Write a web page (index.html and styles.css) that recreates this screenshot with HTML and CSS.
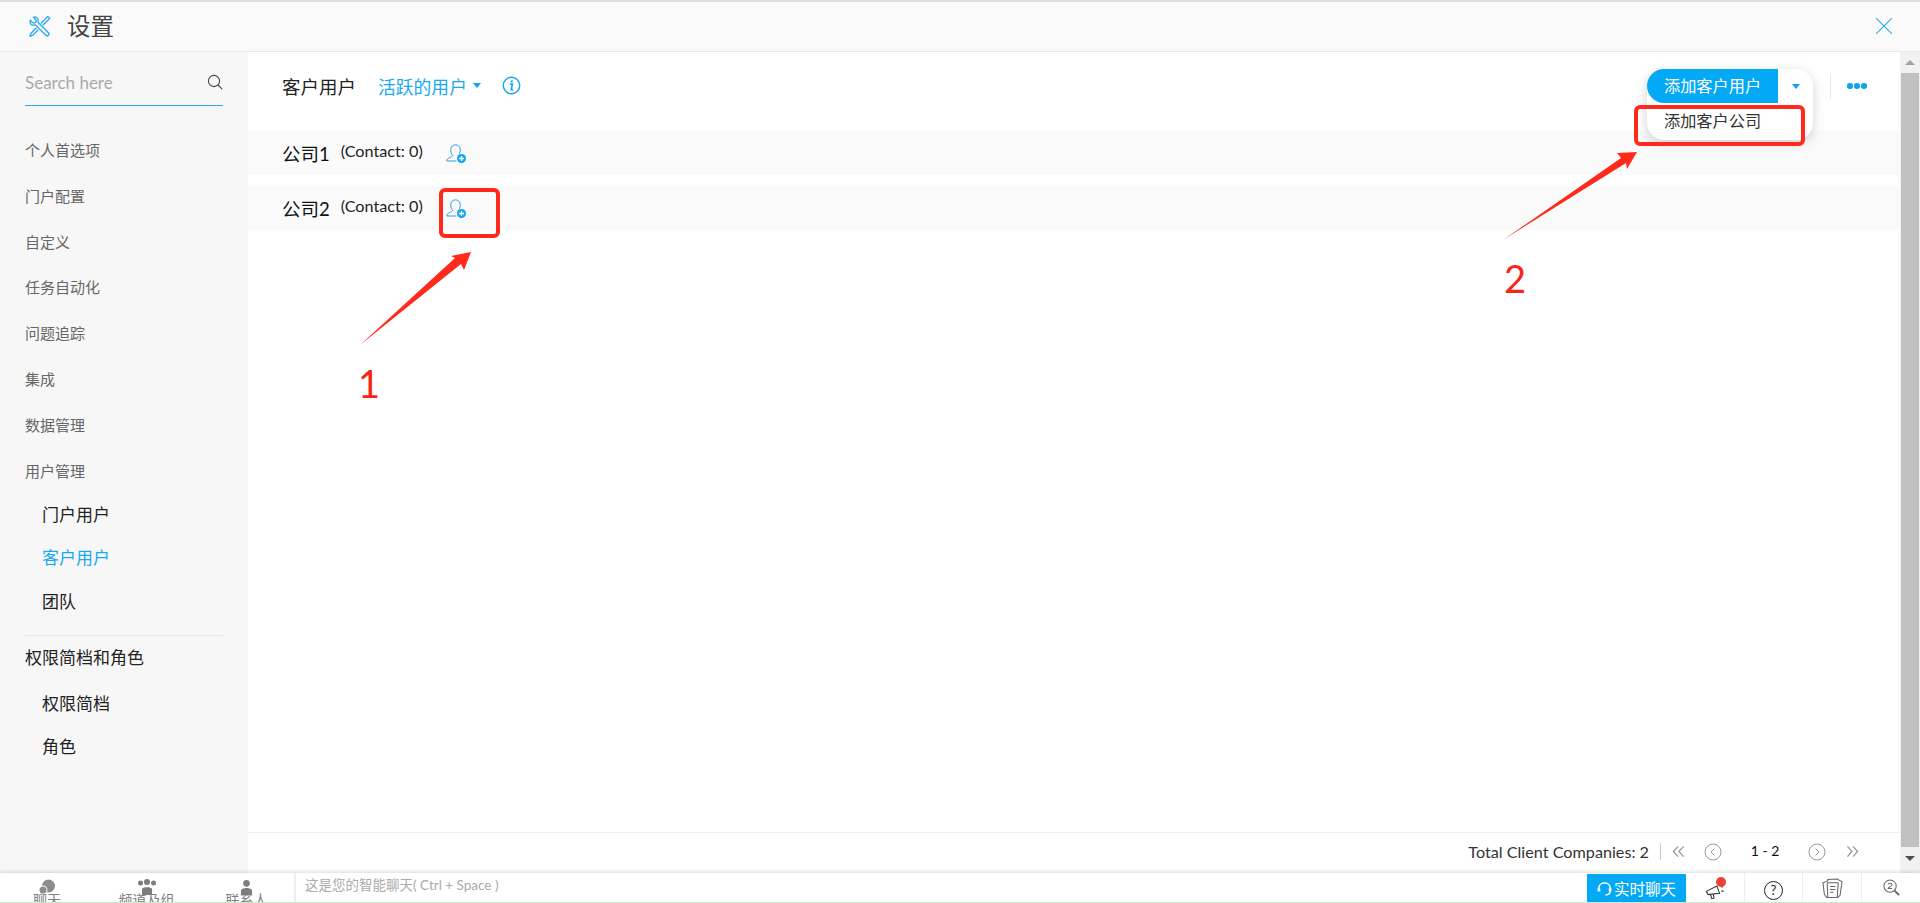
FILE: index.html
```html
<!DOCTYPE html>
<html lang="zh-CN">
  <head>
    <meta charset="UTF-8" />
    <meta name="viewport" content="width=device-width, initial-scale=1.0" />
    <title>设置</title>
    <link rel="stylesheet" href="styles.css">
  </head>
  <body>
    <header class="topbar">
      <svg class="tools-icon" viewBox="0 0 24 24" fill="none" stroke="#29a9ee" stroke-width="1.4" stroke-linejoin="round">
        <path d="M2.5 5.5 5.5 8.5 8 8 8.6 5.4 5.6 2.4C8 1.2 11 3 10.6 6.2L10.4 7.6 21.6 18.8C22.9 20.2 20.4 22.8 18.9 21.4L7.7 10.3 6 10.6C3.2 11 1.2 8 2.5 5.5Z" />
        <path d="M13.4 8.8 19 3 20.6 1.6 22.6 3.4 21 5.2 15.3 10.8M8.8 13.4 3.2 19 2 22.2 5 21 10.8 15.3" />
      </svg>
      <h1 class="page-title">设置</h1>
      <svg class="close-icon" viewBox="0 0 16 16" stroke="#29a9ee" stroke-width="1.1">
        <path d="M0 0 16 16M16 0 0 16" />
      </svg>
    </header>

    <div class="middle">
      <aside class="sidebar">
        <div class="search">
          <span class="search-text">Search here</span>
          <svg class="search-icon" viewBox="0 0 16 16" fill="none" stroke="#444" stroke-width="1.1">
            <circle cx="7" cy="7" r="5.6" />
            <path d="M11 11 15.2 15.2" />
          </svg>
        </div>
        <nav class="nav-main">
          <a>个人首选项</a>
          <a>门户配置</a>
          <a>自定义</a>
          <a>任务自动化</a>
          <a>问题追踪</a>
          <a>集成</a>
          <a>数据管理</a>
          <a>用户管理</a>
        </nav>
        <nav class="nav-sub">
          <a>门户用户</a>
          <a class="active">客户用户</a>
          <a>团队</a>
        </nav>
        <div class="nav-group">权限简档和角色</div>
        <nav class="nav-sub nav-sub-last">
          <a>权限简档</a>
          <a>角色</a>
        </nav>
      </aside>

      <main class="main">
        <div class="main-head">
          <span class="main-title">客户用户</span>
          <span class="filter">活跃的用户</span>
          <span class="caret"></span>
          <svg class="info-icon" viewBox="0 0 18 18" fill="none" stroke="#0ea5f0">
            <circle cx="9" cy="9" r="7.8" stroke-width="1.3" />
            <path d="M7.4 7.6H9.8L8.8 13H10.6" stroke-width="1.5" />
            <path d="M9.2 4.2V6" stroke-width="2" />
          </svg>
          <div class="add-menu">
            <div class="add-row">
              <span class="add-btn">添加客户用户</span>
              <span class="add-arrow"><span class="caret"></span></span>
            </div>
            <div class="add-item">添加客户公司</div>
          </div>
          <span class="more"><i></i><i></i><i></i></span>
        </div>

        <div class="company">
          <span class="company-name">公司1</span>
          <span class="company-count">(Contact: 0)</span>
          <svg class="user-add" viewBox="0 0 20 20" fill="none" stroke="#2c9fe8" stroke-width="1">
            <path d="M0.8 18C0.8 14.5 5.500 14.500 6.800 12.500 5 10.500 4.500 8 4.800 6 5.300 0.500 13.700 0.500 14.200 6 14.400 8 14 10 13 11.500M0.800 18H10.500" />
            <circle cx="15.500" cy="15.500" r="4.500" fill="#12a5f4" stroke="none" />
            <path d="M13 15.500H18M15.500 13V18" stroke="#fff" stroke-width="1.300" />
          </svg>
        </div>
        <div class="company">
          <span class="company-name">公司2</span>
          <span class="company-count">(Contact: 0)</span>
          <svg class="user-add" viewBox="0 0 20 20" fill="none" stroke="#2c9fe8" stroke-width="1">
            <path d="M0.8 18C0.8 14.5 5.500 14.500 6.800 12.500 5 10.500 4.500 8 4.800 6 5.300 0.500 13.700 0.500 14.200 6 14.400 8 14 10 13 11.500M0.800 18H10.500" />
            <circle cx="15.500" cy="15.500" r="4.500" fill="#12a5f4" stroke="none" />
            <path d="M13 15.500H18M15.500 13V18" stroke="#fff" stroke-width="1.300" />
          </svg>
        </div>

        <div class="pager">
          <span class="pager-total">Total Client Companies: 2</span>
          <svg class="pager-first" viewBox="0 0 14 13" fill="none" stroke="#999" stroke-width="1.4">
            <path d="M6.5 1 1.500 6.500 6.500 12M12.500 1 7.500 6.500 12.500 12" />
          </svg>
          <svg class="pager-circle" viewBox="0 0 18 18" fill="none" stroke="#999">
            <circle cx="9" cy="9" r="8" />
            <path d="M10.500 5.500 7 9 10.500 12.500" />
          </svg>
          <span class="pager-range">1 - 2</span>
          <svg class="pager-circle" viewBox="0 0 18 18" fill="none" stroke="#999">
            <circle cx="9" cy="9" r="8" />
            <path d="M7.500 5.500 11 9 7.500 12.500" />
          </svg>
          <svg class="pager-last" viewBox="0 0 14 13" fill="none" stroke="#999" stroke-width="1.4">
            <path d="M1.500 1 6.500 6.500 1.500 12M7.500 1 12.500 6.500 7.500 12" />
          </svg>
        </div>
      </main>

      <div class="scrollbar">
        <span class="scroll-up"></span>
        <span class="scroll-thumb"></span>
        <span class="scroll-down"></span>
      </div>
    </div>

    <footer class="bottombar">
      <div class="tabs">
        <div class="tab tab-chat">
          <svg viewBox="0 0 18 16" fill="#8c8c8c">
            <circle cx="10.500" cy="7" r="6.500" />
            <circle cx="5" cy="11" r="4.500" fill="#fff" />
            <circle cx="5" cy="11" r="3.500" />
          </svg>
          <span>聊天</span>
        </div>
        <div class="tab tab-channel">
          <svg viewBox="0 0 20 16" fill="#7d7d7d">
            <circle cx="3.500" cy="4" r="2.500" />
            <circle cx="10" cy="3" r="3" />
            <circle cx="16.500" cy="4" r="2.500" />
            <path d="M5 16V10C5 7.500 15 7.500 15 10V16Z" />
          </svg>
          <span>频道及组</span>
        </div>
        <div class="tab tab-contact">
          <svg viewBox="0 0 14 17" fill="#7d7d7d">
            <circle cx="7" cy="4" r="3.600" />
            <path d="M1 17V12C1 8 13 8 13 12V17Z" />
          </svg>
          <span>联系人</span>
        </div>
      </div>
      <div class="smart-chat">这是您的智能聊天( Ctrl + Space )</div>
      <div class="live-chat">
        <svg viewBox="0 0 16 16" fill="none" stroke="#fff" stroke-width="1.600">
          <path d="M2 11V7.500C2 0.500 14 0.500 14 7.500V11C14 13.500 11.500 14.800 9 14.800" />
          <path d="M2 8V11M14 8V11" stroke-width="3" />
        </svg>
        <span>实时聊天</span>
      </div>
      <div class="tool tool-horn">
        <svg viewBox="0 0 22 22" fill="none" stroke="#333" stroke-width="1.200">
          <path d="M1.500 12.500 13 6.500 16 14.500 3.500 16Z" />
          <path d="M6 16 7.500 20.500 10 20 9 15.500" />
          <path d="M18 8 20 7M18 12 20.500 12.500" />
        </svg>
        <i class="dot"></i>
      </div>
      <div class="tool tool-help">
        <span class="help-icon">?</span>
      </div>
      <div class="tool tool-notes">
        <svg viewBox="0 0 24 22" fill="none" stroke="#666" stroke-width="1.100">
          <path d="M2 5 7 3 7 1.500 17 1 22 4 20 18 17.500 20.500 6 20.500 3.500 17Z" />
          <path d="M6.500 5H18L17 20M6.500 5 7 20" />
          <path d="M9.500 9H15M9.500 12H15M9.500 15H13" />
        </svg>
      </div>
      <div class="tool tool-search">
        <svg viewBox="0 0 18 18" fill="none" stroke="#666" stroke-width="1.100">
          <circle cx="7.500" cy="7.500" r="6.500" />
          <path d="M12 12 17 17" stroke-width="2" />
          <path d="M5.500 5.800C5.800 4 9.500 4 9.500 6 9.500 7.500 6 8.500 5.500 10H9.500" />
        </svg>
      </div>
    </footer>

    <!-- annotations drawn on top of the screenshot -->
    <svg class="notes" viewBox="0 0 1920 903" fill="none" stroke="#ff2a1c" stroke-width="4">
      <rect x="441" y="190" width="57" height="46" rx="4" />
      <rect x="1636" y="107" width="167" height="37" rx="4" />
      <path d="M360 345 455 258 451 256 471 252 464 270 461 264Z" fill="#ff2a1c" stroke="none" />
      <path d="M1503 240 1621 158 1617 153 1637 152 1627 169 1626 163Z" fill="#ff2a1c" stroke="none" />
    </svg>
    <span class="note-num note-one">1</span>
    <span class="note-num note-two">2</span>
  </body>
</html>
```

FILE: styles.css
```css
* {
  box-sizing: border-box;
}
html,
body {
  margin: 0;
  height: 903px;
  overflow: hidden;
}
body {
  position: relative;
  display: flex;
  flex-direction: column;
  font-family: Lato, "Noto Sans CJK SC", sans-serif;
  color: #222;
  background: #fff;
}

/* top bar */
.topbar {
  height: 52px;
  flex: none;
  display: flex;
  align-items: center;
  padding: 0 28px 0 28px;
  background: #fafafa;
  border-top: 2px solid #dfdfe3;
  border-bottom: 1px solid #e8e8e8;
}
.tools-icon {
  width: 23px;
  height: 23px;
}
.page-title {
  margin: -4px 0 0 16px;
  font-size: 23.5px;
  font-weight: 400;
  color: #444;
}
.close-icon {
  width: 16px;
  height: 16px;
  margin: -2px 0 0 auto;
}

.middle {
  flex: 1;
  display: flex;
  min-height: 0;
}

/* sidebar */
.sidebar {
  width: 248px;
  flex: none;
  padding: 0 25px;
  background: #f7f7f7;
}
.search {
  height: 54px;
  display: flex;
  align-items: center;
  justify-content: space-between;
  padding-top: 7px;
  border-bottom: 1px solid #2ea8ea;
}
.search-text {
  font-size: 17px;
  color: #aaa;
}
.search-icon {
  width: 16px;
  height: 16px;
}
.nav-main {
  margin-top: 22px;
}
.nav-main a {
  display: block;
  height: 45.8px;
  line-height: 45.8px;
  font-size: 15px;
  color: #666;
}
.nav-sub {
  margin-top: -1.5px;
}
.nav-sub a {
  display: block;
  height: 43.5px;
  line-height: 43.5px;
  padding-left: 17px;
  font-size: 17px;
  color: #222;
}
.nav-sub a.active {
  color: #1aa8f2;
}
.nav-group {
  margin-top: 12px;
  padding-top: 6px;
  height: 48px;
  line-height: 32px;
  font-size: 17px;
  color: #222;
  border-top: 1px solid #e6e6e6;
}

/* main */
.main {
  flex: 1;
  display: flex;
  flex-direction: column;
  min-width: 0;
}
.main-head {
  position: relative;
  height: 79px;
  flex: none;
  display: flex;
  align-items: center;
  padding: 0 0 12px 34px;
}
.main-title {
  font-size: 18.5px;
  color: #222;
}
.filter {
  margin-left: 22px;
  font-size: 17.8px;
  color: #1aa8f2;
}
.caret {
  display: inline-block;
  width: 0;
  height: 0;
  border-left: 4.5px solid transparent;
  border-right: 4.5px solid transparent;
  border-top: 5px solid #0ea5f0;
}
.main-head > .caret {
  margin-left: 6px;
}
.info-icon {
  width: 19px;
  height: 19px;
  margin-left: 21px;
}
.add-menu {
  position: absolute;
  top: 17px;
  left: 1399px;
  width: 166px;
  height: 71px;
  border-radius: 17px;
  background: #fff;
  box-shadow: 0 3px 12px rgba(0, 0, 0, 0.18);
}
.add-row {
  display: flex;
  height: 34px;
}
.add-btn {
  width: 131px;
  padding-left: 17px;
  line-height: 34px;
  font-size: 16.2px;
  color: #fff;
  background: #03a9f5;
  border-radius: 17px 0 0 17px;
}
.add-arrow {
  flex: 1;
  display: flex;
  align-items: center;
  justify-content: center;
}
.add-item {
  padding-left: 17px;
  line-height: 36px;
  font-size: 16.2px;
  color: #333;
}
.more {
  position: absolute;
  top: 21px;
  left: 1582px;
  display: flex;
  gap: 1.5px;
  padding-left: 16px;
  height: 26px;
  align-items: center;
  border-left: 1px solid #e6e6e6;
}
.more i {
  width: 5.5px;
  height: 5.5px;
  border-radius: 50%;
  background: #0ea5f0;
}
.company {
  height: 44px;
  flex: none;
  display: flex;
  align-items: center;
  margin-bottom: 11px;
  padding-left: 34px;
  background: #fafafa;
}
.company-name {
  font-size: 18.5px;
  color: #111;
}
.company-count {
  margin: -6px 0 0 11px;
  font-size: 16.2px;
  color: #222;
}
.user-add {
  width: 20px;
  height: 20px;
  margin-left: 23px;
}
.pager {
  margin-top: auto;
  height: 41px;
  flex: none;
  display: flex;
  align-items: center;
  justify-content: flex-end;
  padding: 0 41px 3px 0;
  border-top: 1px solid #f0f0f0;
}
.pager-total {
  padding-right: 11px;
  font-size: 16.2px;
  line-height: 17px;
  color: #333;
  border-right: 1px solid #ccc;
}
.pager-first,
.pager-last {
  width: 13px;
  height: 13px;
}
.pager-first {
  margin-left: 11px;
}
.pager-last {
  margin-left: 20px;
}
.pager-circle {
  width: 18px;
  height: 18px;
}
.pager-first + .pager-circle {
  margin-left: 19px;
}
.pager-range {
  width: 86px;
  margin-top: -3px;
  text-align: center;
  font-size: 14px;
  color: #111;
}

/* scrollbar */
.scrollbar {
  width: 20px;
  flex: none;
  display: flex;
  flex-direction: column;
  align-items: center;
  background: #f1f1f1;
}
.scroll-up {
  margin-top: 8px;
  border-left: 5px solid transparent;
  border-right: 5px solid transparent;
  border-bottom: 5px solid #a3a3a3;
}
.scroll-thumb {
  width: 18px;
  height: 774px;
  margin-top: 8px;
  background: #c1c1c1;
}
.scroll-down {
  margin-top: 9px;
  border-left: 5px solid transparent;
  border-right: 5px solid transparent;
  border-top: 5px solid #505050;
}

/* bottom bar */
.bottombar {
  height: 30px;
  flex: none;
  display: flex;
  align-items: stretch;
  overflow: hidden;
  background: #fff;
  border-bottom: 1px solid #cfe6cf;
  box-shadow: 0 -1px 4px rgba(0, 0, 0, 0.15);
  z-index: 1;
}
.tabs {
  width: 296px;
  flex: none;
  display: flex;
  border-right: 2px solid #eee;
}
.tab {
  position: relative;
  display: flex;
  flex-direction: column;
  align-items: center;
  padding-top: 6px;
  font-size: 14px;
  color: #808080;
}
.tab span {
  position: absolute;
  top: 16px;
  white-space: nowrap;
}
.tab-chat {
  width: 94px;
}
.tab-chat svg {
  width: 18px;
  height: 16px;
}
.tab-channel {
  width: 105px;
}
.tab-channel svg {
  width: 20px;
  height: 16px;
}
.tab-contact {
  width: 95px;
}
.tab-contact svg {
  width: 13px;
  height: 17px;
}
.smart-chat {
  flex: 1;
  padding-left: 9px;
  line-height: 25px;
  font-size: 13.5px;
  color: #aaa;
}
.live-chat {
  width: 99px;
  flex: none;
  display: flex;
  align-items: center;
  justify-content: center;
  gap: 2px;
  margin-top: 1px;
  font-size: 15.5px;
  color: #fff;
  background: #03a9f5;
}
.live-chat svg {
  width: 15px;
  height: 15px;
}
.tool {
  position: relative;
  width: 58px;
  flex: none;
  display: flex;
  align-items: center;
  justify-content: center;
  border-right: 1px solid #eee;
}
.tool svg {
  display: block;
}
.tool-horn {
  width: 59px;
}
.tool-horn svg {
  width: 20px;
  height: 20px;
  margin-top: 4px;
}
.dot {
  position: absolute;
  top: 4px;
  left: 30px;
  width: 10px;
  height: 10px;
  border-radius: 50%;
  background: #ee4136;
}
.help-icon {
  width: 19px;
  height: 19px;
  margin-top: 5px;
  border: 1.5px solid #222;
  border-radius: 50%;
  text-align: center;
  line-height: 16px;
  font-size: 13px;
  color: #222;
}
.tool-notes {
  width: 59px;
}
.tool-notes svg {
  width: 23px;
  height: 21px;
  margin-top: 1px;
}
.tool-search {
  border-right: 0;
}
.tool-search svg {
  width: 17px;
  height: 17px;
}

/* red annotations */
.notes {
  position: absolute;
  top: 0;
  left: 0;
  width: 1920px;
  height: 903px;
  z-index: 2;
  pointer-events: none;
}
.note-num {
  position: absolute;
  z-index: 2;
  font-family: Lato, sans-serif;
  font-size: 38px;
  line-height: 1;
  color: #f9241a;
}
.note-one {
  left: 358px;
  top: 364px;
}
.note-two {
  left: 1504px;
  top: 259px;
}
```
